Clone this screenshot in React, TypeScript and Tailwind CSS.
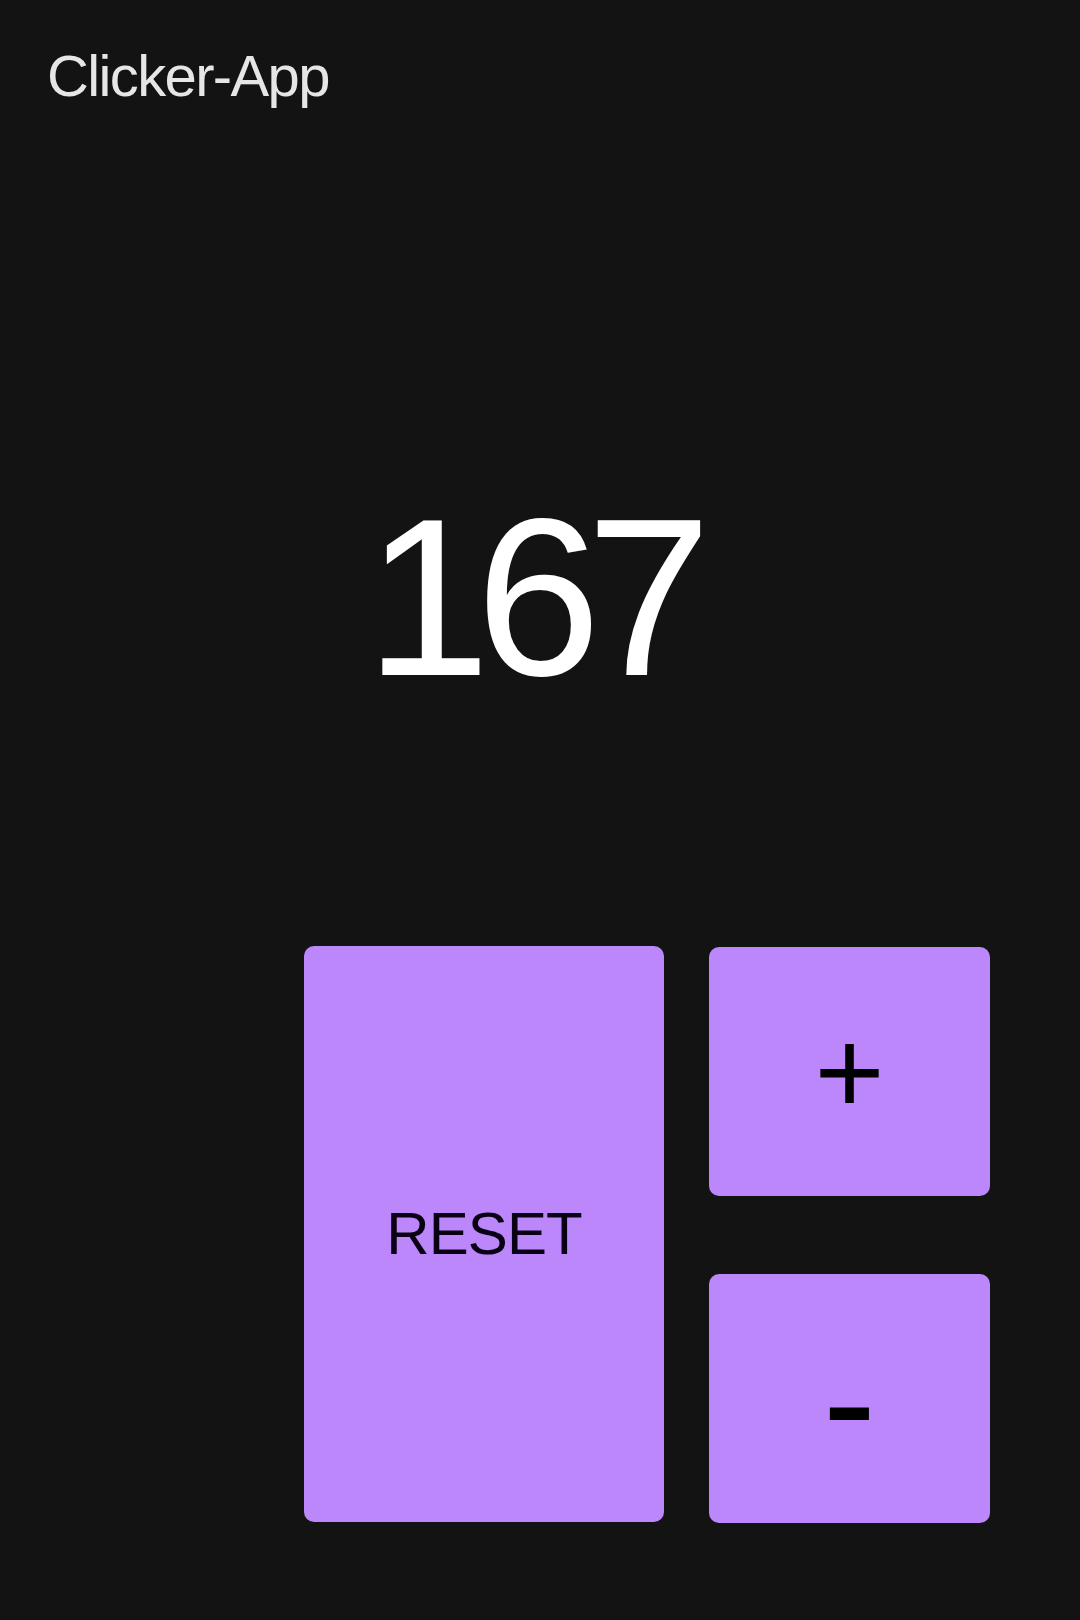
import { useState } from "react";

export default function App() {
  const [count, setCount] = useState(167);

  return (
    <div className="min-h-[1620px] w-full bg-[#131313] font-['Liberation_Sans',Arial,sans-serif]">
      <header className="pl-[47px] pt-[47px]">
        <h1 className="text-[58px] leading-none tracking-[-0.028em] text-[#e6e6e6]">Clicker-App</h1>
      </header>

      <main className="flex flex-col items-center">
        <div className="mt-[380px] pr-[18px] text-[225px] leading-none tracking-[-0.065em] text-white">
          {count}
        </div>

        <div className="mt-[236px] flex w-full gap-[45px] pl-[304px]">
          <button
            onClick={() => setCount(0)}
            className="flex h-[576px] w-[360px] items-center justify-center rounded-[10px] bg-[#bb87fb] text-[60px] leading-none tracking-[-0.015em] text-[#0a0014]"
          >
            RESET
          </button>

          <div className="flex w-[281px] flex-col gap-[78px] pt-px">
            <button
              onClick={() => setCount((c) => c + 1)}
              className="flex h-[249px] items-center justify-center rounded-[10px] bg-[#bb87fb] text-[120px] leading-none text-black"
            >
              +
            </button>
            <button
              onClick={() => setCount((c) => c - 1)}
              className="flex h-[249px] items-center justify-center rounded-[10px] bg-[#bb87fb] pt-[4px] text-[160px] leading-none text-black"
            >
              -
            </button>
          </div>
        </div>
      </main>
    </div>
  );
}
